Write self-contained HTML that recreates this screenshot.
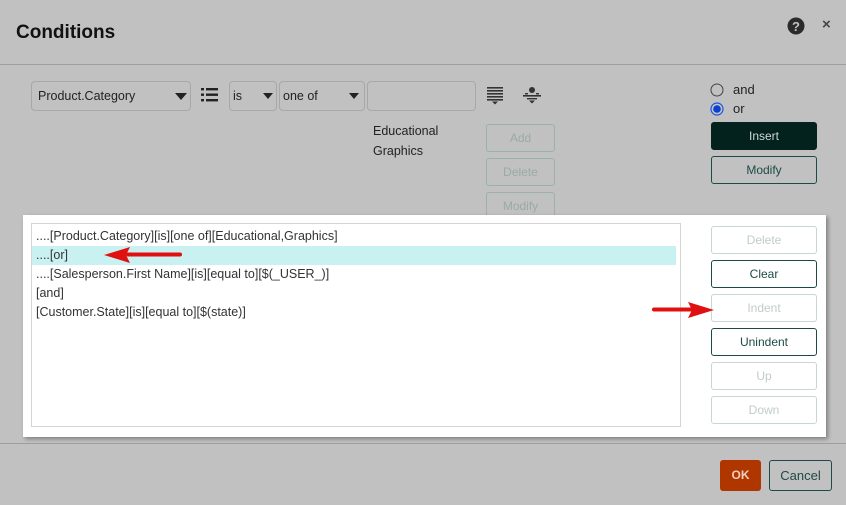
<!DOCTYPE html>
<html><head><style>
body{margin:0;width:846px;height:505px;background:#c1c1c1;font-family:"Liberation Sans",sans-serif;position:relative;overflow:hidden;font-size:13px;color:#222}
.a{position:absolute}
.sel{position:absolute;border:1px solid #a8a8a8;border-radius:4px;background:#c1c1c1;height:30px;box-sizing:border-box;font-size:12.5px;line-height:28px;padding-left:6px}
.tri{position:absolute;width:0;height:0;border-left:6px solid transparent;border-right:6px solid transparent;border-top:7px solid #222;top:11px}
.btn{position:absolute;box-sizing:border-box;border:1px solid #1d4a46;border-radius:3px;text-align:center;font-size:12px;color:#1d4a46;background:transparent}
.dis{border-color:#99b2ae;color:#99aaa8}
.w .dis{border-color:#c8d6d4;color:#c0cccb}
.w .btn{background:#fff}
.ln{font-size:12.5px;line-height:19px;color:#333;padding-left:4px;height:19px}
</style></head><body>
<div class="a" style="left:16px;top:22px;font-size:19px;font-weight:bold;color:#111">Conditions</div>
<svg class="a" style="left:787px;top:17px" width="18" height="18"><circle cx="9" cy="9" r="8.5" fill="#2b2b2b"/><text x="9" y="14" font-size="13" font-weight="bold" text-anchor="middle" fill="#c1c1c1" font-family="Liberation Sans">?</text></svg>
<div class="a" style="left:822px;top:16px;font-size:15px;color:#444;font-weight:bold">×</div>
<div class="a" style="left:0;top:64px;width:846px;height:1px;background:#9e9e9e"></div>

<div class="sel" style="left:31px;top:81px;width:160px">Product.Category<div class="tri" style="left:143px"></div></div>
<svg class="a" style="left:201px;top:88px" width="17" height="14"><g fill="#222"><rect x="0" y="0" width="3" height="2.4"/><rect x="5" y="0" width="12" height="2.4"/><rect x="0" y="5.5" width="3" height="2.4"/><rect x="5" y="5.5" width="12" height="2.4"/><rect x="0" y="11" width="3" height="2.4"/><rect x="5" y="11" width="12" height="2.4"/></g></svg>
<div class="sel" style="left:229px;top:81px;width:48px;padding-left:3px">is<div class="tri" style="left:33px;border-left-width:5px;border-right-width:5px;border-top-width:6px"></div></div>
<div class="sel" style="left:279px;top:81px;width:86px;padding-left:3px">one of<div class="tri" style="left:69px;border-left-width:5px;border-right-width:5px;border-top-width:6px"></div></div>
<div class="sel" style="left:367px;top:81px;width:109px"></div>
<svg class="a" style="left:487px;top:87px" width="16" height="18"><g fill="#333"><rect y="0" width="16" height="1.6"/><rect y="3" width="16" height="1.6"/><rect y="6" width="16" height="1.6"/><rect y="9" width="16" height="1.6"/><rect y="12" width="16" height="1.6"/><path d="M5 14.5h6l-3 3z"/></g></svg>
<svg class="a" style="left:523px;top:86px" width="18" height="19"><g fill="#333"><circle cx="9" cy="4" r="3"/><rect x="0" y="9" width="18" height="1.6"/><rect x="2" y="7" width="3" height="1.4"/><rect x="13" y="7" width="3" height="1.4"/><rect x="4" y="12" width="10" height="1.4"/><path d="M6 14.5h6l-3 3z"/></g></svg>
<div class="a" style="left:373px;top:121px;font-size:12.5px;line-height:20px;color:#222">Educational<br>Graphics</div>
<div class="btn dis" style="left:486px;top:124px;width:69px;height:28px;line-height:26px">Add</div>
<div class="btn dis" style="left:486px;top:158px;width:69px;height:28px;line-height:26px">Delete</div>
<div class="btn dis" style="left:486px;top:192px;width:69px;height:28px;line-height:26px">Modify</div>

<svg class="a" style="left:710px;top:83px" width="16" height="36"><circle cx="7" cy="7" r="6" fill="none" stroke="#444" stroke-width="1"/><circle cx="7" cy="26" r="6" fill="none" stroke="#1a55e0" stroke-width="1.2"/><circle cx="7" cy="26" r="3.8" fill="#0a3fd0"/></svg>
<div class="a" style="left:733px;top:82px;font-size:13px">and</div>
<div class="a" style="left:733px;top:101px;font-size:13px">or</div>
<div class="btn" style="left:711px;top:122px;width:106px;height:28px;line-height:26px;background:#03221e;border-color:#03221e;color:#cfd8d6">Insert</div>
<div class="btn" style="left:711px;top:156px;width:106px;height:28px;line-height:26px">Modify</div>

<div class="a w" style="left:23px;top:215px;width:803px;height:222px;background:#fff;box-shadow:2px 2px 4px rgba(0,0,0,.35)">
 <div class="a" style="left:8px;top:8px;width:648px;height:202px;border:1px solid #d4d4d4">
  <div style="height:3px"></div>
  <div class="ln">....[Product.Category][is][one of][Educational,Graphics]</div>
  <div class="ln" style="background:#c9f1f1;margin-right:4px">....[or]</div>
  <div class="ln">....[Salesperson.First Name][is][equal to][$(_USER_)]</div>
  <div class="ln">[and]</div>
  <div class="ln">[Customer.State][is][equal to][$(state)]</div>
 </div>
 <div class="btn dis" style="left:688px;top:11px;width:106px;height:28px;line-height:26px">Delete</div>
 <div class="btn" style="left:688px;top:45px;width:106px;height:28px;line-height:26px">Clear</div>
 <div class="btn dis" style="left:688px;top:79px;width:106px;height:28px;line-height:26px">Indent</div>
 <div class="btn" style="left:688px;top:113px;width:106px;height:28px;line-height:26px">Unindent</div>
 <div class="btn dis" style="left:688px;top:147px;width:106px;height:28px;line-height:26px">Up</div>
 <div class="btn dis" style="left:688px;top:181px;width:106px;height:28px;line-height:26px">Down</div>
</div>
<svg class="a" style="left:100px;top:246px" width="82" height="20"><path d="M80 8.5H28" stroke="#e01010" stroke-width="4" stroke-linecap="round"/><path d="M4 9L30 1 26 9 30 17z" fill="#e01010"/></svg>
<svg class="a" style="left:652px;top:300px" width="66" height="20"><path d="M2 9.5H40" stroke="#e01010" stroke-width="4" stroke-linecap="round"/><path d="M62 10L36 2 40 10 36 18z" fill="#e01010"/></svg>

<div class="a" style="left:0;top:443px;width:846px;height:1px;background:#9e9e9e"></div>
<div class="btn" style="left:720px;top:460px;width:41px;height:31px;line-height:31px;background:#b03600;border:none;color:#f1d0c0;font-weight:bold">OK</div>
<div class="btn" style="left:769px;top:460px;width:63px;height:31px;line-height:29px;font-size:13px">Cancel</div>
</body></html>
